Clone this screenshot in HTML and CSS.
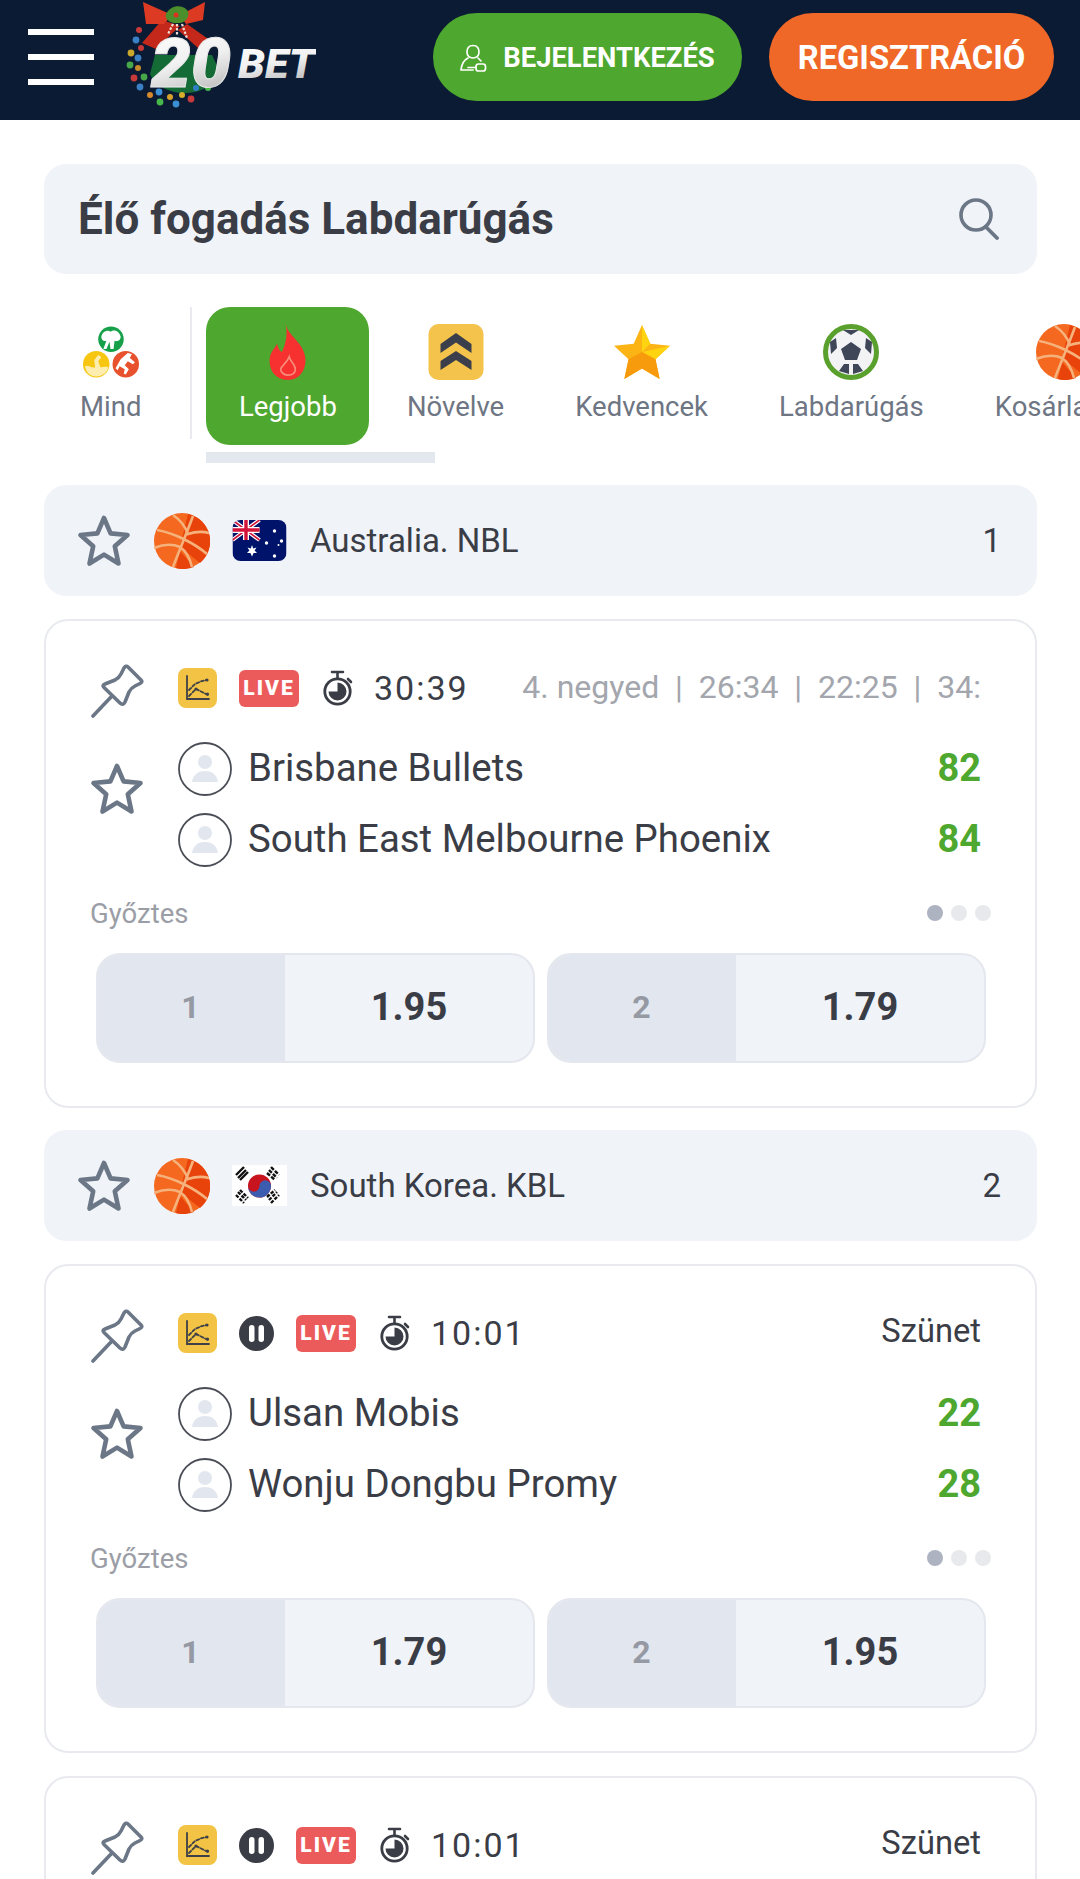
FILE: index.html
```html
<!DOCTYPE html>
<html lang="hu">
<head>
    <meta charset="UTF-8">
    <meta name="viewport" content="width=device-width, initial-scale=1.0">
    <title>Élő fogadás Labdarúgás</title>
    <link rel="stylesheet" href="styles.css">
</head>
<body>
    <!-- ikonok -->
    <svg class="sprite" xmlns="http://www.w3.org/2000/svg">
        <defs>
            <linearGradient id="logoFill" x1="0" y1="0" x2="0.3" y2="1">
                <stop offset="0" stop-color="#ffffff"/>
                <stop offset="0.55" stop-color="#f1f1f1"/>
                <stop offset="1" stop-color="#bdbdbd"/>
            </linearGradient>
            <clipPath id="flagClip"><rect width="54" height="41" rx="8"/></clipPath>
        </defs>
        <symbol id="i-star" viewBox="0 0 54 54">
            <path d="M27 4 L33.6 19.4 L50.5 21 L37.8 32.2 L41.5 49.5 L27 40.6 L12.5 49.5 L16.2 32.2 L3.5 21 L20.4 19.4Z" fill="none" stroke="#6b7686" stroke-width="4.6" stroke-linejoin="round"/>
        </symbol>
        <symbol id="i-ball" viewBox="0 0 56 56">
            <circle cx="28" cy="28" r="28" fill="#f4691f"/>
            <path d="M34 1 A28 28 0 0 1 46 50 L26 34Z" fill="#e8430a"/>
            <path d="M22 55 L26 38 L40 54 A28 28 0 0 1 22 55Z" fill="#e8430a"/>
            <g fill="none" stroke="#f6b27c" stroke-width="2.6">
                <path d="M39 3 C34 17 25 38 19 54"/>
                <path d="M3 17 C20 20 40 30 53 41"/>
                <path d="M0 35 C10 31 19 31 26 34 C32 38 36 46 38 54"/>
                <path d="M19 2 C25 6 31 13 34 21 C40 19 48 18 55 20"/>
            </g>
        </symbol>
        <symbol id="i-aus" viewBox="0 0 54 41">
            <g clip-path="url(#flagClip)">
                <rect width="54" height="41" fill="#00136b"/>
                <path d="M0 0 L27 20 M27 0 L0 20" stroke="#fff" stroke-width="4"/>
                <path d="M0 0 L27 20 M27 0 L0 20" stroke="#d2143a" stroke-width="1.6"/>
                <path d="M13.5 0 V20 M0 10 H27" stroke="#fff" stroke-width="6"/>
                <path d="M13.5 0 V20 M0 10 H27" stroke="#d2143a" stroke-width="3.4"/>
                <g fill="#fff">
                    <path d="M19.500 25 L20.700 28.500 L24 27.500 L22.100 30.500 L24.500 33 L21.100 33.100 L19.500 36.500 L17.900 33.100 L14.500 33 L16.900 30.500 L15 27.500 L18.300 28.500Z"/>
                    <circle cx="42" cy="11" r="1.7"/>
                    <circle cx="34" cy="23" r="1.7"/>
                    <circle cx="49" cy="21" r="1.7"/>
                    <circle cx="42" cy="36" r="1.7"/>
                    <circle cx="46" cy="25" r="1"/>
                </g>
            </g>
        </symbol>
        <symbol id="i-kor" viewBox="0 0 55 41">
            <rect width="55" height="41" fill="#fff"/>
            <circle cx="27.5" cy="21" r="11.5" fill="#c8141e"/>
            <path d="M16 21 A5.75 5.75 0 0 0 27.5 21 A5.75 5.75 0 0 1 39 21 A11.5 11.5 0 0 1 16 21Z" fill="#3c5cb0"/>
            <g stroke="#111" stroke-width="2.4">
                <path d="M4 10 L12 2 M6 13 L14 5 M8 15 L16 7"/>
                <path d="M39 2 L47 10 M37 5 L45 13 M35 8 L43 15" stroke-dasharray="4 1.5"/>
                <path d="M4 30 L12 38 M6 27 L14 35 M8 25 L16 33" stroke-dasharray="3.5 1.5"/>
                <path d="M39 38 L47 30 M37 35 L45 27 M35 32 L43 25" stroke-dasharray="3.5 1.5"/>
            </g>
        </symbol>
        <symbol id="i-pin" viewBox="0 0 54 54">
            <g fill="none" stroke="#6b7686" stroke-width="3.6" stroke-linejoin="round" stroke-linecap="round">
                <path d="M38 3 L51 16 Q53 18 50 19.5 L45 22 Q41 24 39 28 L35 38 Q33 42 30 39 L14.5 24 Q11.5 21 15 20 L25 16 Q29 14 31 10 L34 4 Q36 1 38 3Z"/>
                <path d="M3 52 L21 33"/>
            </g>
        </symbol>
        <symbol id="i-chart" viewBox="0 0 39 40">
            <rect width="39" height="40" rx="8" fill="#f2c344"/>
            <g fill="none" stroke="#3d4048" stroke-width="1.8" stroke-linecap="round">
                <path d="M9 8 V31 H31"/>
                <path d="M11 22 L17 16 L24 13 L29 12" stroke-dasharray="3 2"/>
                <path d="M11 28 L18 21 L24 24 L30 27" stroke-dasharray="3 2"/>
            </g>
            <g fill="#3d4048">
                <circle cx="29" cy="12" r="1.6"/>
                <circle cx="18" cy="21" r="1.6"/>
                <circle cx="29.500" cy="26" r="1.6"/>
            </g>
        </symbol>
        <symbol id="i-watch" viewBox="0 0 30 36">
            <path d="M9 2 H20 M14.500 2 V9 M25 9 L28 12" fill="none" stroke="#3a3d46" stroke-width="2.6" stroke-linecap="round"/>
            <circle cx="14.500" cy="21.500" r="12.700" fill="#fff" stroke="#3a3d46" stroke-width="2.8"/>
            <path d="M14.500 12.500 A9 9 0 1 1 5.500 21.500 H14.500Z" fill="#3a3d46"/>
        </symbol>
        <symbol id="i-avatar" viewBox="0 0 54 54">
            <circle cx="27" cy="27" r="26" fill="#fff" stroke="#4a4d55" stroke-width="1.8"/>
            <circle cx="27" cy="20" r="7" fill="#e2e6ee"/>
            <path d="M14 40 C15 32 21 29 27 29 C33 29 39 32 40 40Z" fill="#e2e6ee"/>
        </symbol>
        <symbol id="i-pause" viewBox="0 0 35 35">
            <circle cx="17.500" cy="17.500" r="17.500" fill="#3a3d46"/>
            <rect x="10" y="9" width="5.500" height="17" rx="2.700" fill="#fff"/>
            <rect x="19.500" y="9" width="5.500" height="17" rx="2.700" fill="#fff"/>
        </symbol>
        <symbol id="i-mind" viewBox="0 0 55 50">
            <circle cx="27.500" cy="12.500" r="12.500" fill="#16a04a"/>
            <path d="M18 10 C19 5 24 3 27 5 C31 2 36 5 37 10 C37 14 33 15 31 14 L30 22 H27 L26 15 L23 22 H20 L23 14 C20 15 18 13 18 10Z" fill="#fff"/>
            <circle cx="13" cy="37" r="13" fill="#f7c610"/>
            <path d="M2 39 C5 37 8 41 12 40 L11 33 L15 28 L18 30 L15 34 L17 40 C20 40 22 39 25 40 C24 45 19 49 13 49 C7 49 3 45 2 39Z" fill="#fdeeb0"/>
            <circle cx="42" cy="37" r="13" fill="#e8512d"/>
            <path d="M44 26 L48 27 L46 31 L51 35 L49 37 L44 34 L41 38 L45 42 L42 47 L40 46 L41 42 L36 39 L34 43 L32 41 L37 32Z" fill="#fff"/>
        </symbol>
        <symbol id="i-flame" viewBox="0 0 32 46">
            <path d="M14 0 C16 9 26 14 29 23 C33 33 28 46 16 46 C5 46 0 37 1 28 C2 22 5 21 7 16 C8 20 9 22 11 23 C14 17 16 8 14 0Z" fill="#f6312f"/>
            <path d="M17 27 C18 31 22 33 22 37 C22 41 19 42 16 42 C13 42 10 40 10 37 C11 34 15 32 17 27Z" fill="none" stroke="#f98a78" stroke-width="1.4"/>
        </symbol>
        <symbol id="i-boost" viewBox="0 0 55 56">
            <rect width="55" height="56" rx="10" fill="#f4c34b"/>
            <path d="M27.500 9 L43 20 V29 L27.500 18.500 L12 29 V20Z" fill="#3a3f4b"/>
            <path d="M27.500 27 L43 37 V46 L27.500 36 L12 46 V37Z" fill="#3a3f4b"/>
        </symbol>
        <symbol id="i-gold" viewBox="0 0 54 52">
            <path d="M27 0 L35 18 L54 20 L40 33 L44 52 L27 42 L10 52 L14 33 L0 20 L19 18Z" fill="#fcb415"/>
            <path d="M27 0 L35 18 L27 26Z M54 20 L40 33 L27 26Z" fill="#fdd40f"/>
            <path d="M44 52 L27 42 L27 26 L40 33Z M10 52 L14 33 L27 26 L27 42Z" fill="#f79a0c"/>
        </symbol>
        <symbol id="i-soccer" viewBox="0 0 56 56">
            <circle cx="28" cy="28" r="25.500" fill="#f3f3f6" stroke="#5aa02c" stroke-width="5"/>
            <path d="M28 18 L38 25 L34 36 H22 L18 25Z" fill="#3e4658"/>
            <path d="M20 6 H36 L28 11Z M7 18 L13 14 L14 24 L8 30Z M49 18 L43 14 L42 24 L48 30Z M16 47 L21 40 H26 L26 50Z M40 47 L35 40 H30 L30 50Z" fill="#3e4658"/>
        </symbol>
        <symbol id="i-search" viewBox="0 0 40 42">
            <circle cx="17" cy="17" r="15" fill="none" stroke="#6b7686" stroke-width="3.6"/>
            <path d="M27 29 L38 40" fill="none" stroke="#6b7686" stroke-width="3.8" stroke-linecap="round"/>
        </symbol>
        <symbol id="i-login" viewBox="0 0 27 28">
            <g fill="none" stroke="#fff" stroke-width="1.7" stroke-linecap="round" stroke-linejoin="round">
                <path d="M13 1.500 C8.500 1.500 7 5 7 8 C7 11 9 14 13 14 C17 14 19 11 19 8 C19 5 17.500 1.500 13 1.500Z"/>
                <path d="M8 14 C4 16 1.500 21 1 26 H13"/>
                <path d="M18 14 C19 15 20 16 21 17"/>
                <rect x="16" y="20" width="9.500" height="7" rx="2.500"/>
                <path d="M16 23.500 H8"/>
            </g>
        </symbol>
    </svg>

    <header class="topbar">
        <button class="menu-btn" aria-label="Menü"><span></span><span></span><span></span></button>
        <svg class="logo" viewBox="0 0 196 120">
            <path d="M35 55 L92 55 L100 72 A36 26 0 0 1 30 74Z" fill="#146b36"/>
            <path d="M42 20 L60 26 L36 49 L22 43Z M67 24 L91 41 L78 48 L58 30Z" fill="#c4281a"/>
            <path d="M23 2 L52 15 L44 24 L26 24Z M85 2 L83 20 L66 24 L60 15Z" fill="#dc3a22"/>
            <path d="M46 14 C50 6 60 4 66 9 C72 14 66 24 58 23 C52 24 44 20 46 14Z" fill="#4b8f2c"/>
            <circle cx="56" cy="15" r="2.500" fill="#d9341f"/>
            <path d="M53 24 L48 34 M62 24 L67 38 M57 24 L57 36" stroke="#f0dcd4" stroke-width="2.200" stroke-dasharray="2.500 1.500"/>
            <g class="lights">
                <circle cx="19" cy="30" r="3" fill="#c83a3a"/>
                <circle cx="16" cy="40" r="3.400" fill="#3b7fc4"/>
                <circle cx="21" cy="48" r="3" fill="#c83a3a"/>
                <circle cx="11" cy="53" r="3.400" fill="#c9a82c"/>
                <circle cx="18" cy="58" r="3.400" fill="#3b7fc4"/>
                <circle cx="10" cy="65" r="3.400" fill="#47a84a"/>
                <circle cx="18" cy="68" r="3" fill="#c98a2c"/>
                <circle cx="14" cy="78" r="3.400" fill="#c83a3a"/>
                <circle cx="24" cy="77" r="3.400" fill="#47a84a"/>
                <circle cx="20" cy="87" r="3.400" fill="#3b7fc4"/>
                <circle cx="30" cy="95" r="3" fill="#d68a2c"/>
                <circle cx="39" cy="92" r="3.400" fill="#3b8fd4"/>
                <circle cx="40" cy="102" r="3.400" fill="#47b84a"/>
                <circle cx="50" cy="97" r="3" fill="#d6a02c"/>
                <circle cx="56" cy="104" r="3.400" fill="#3b8fd4"/>
                <circle cx="62" cy="95" r="3" fill="#d6b02c"/>
                <circle cx="71" cy="99" r="3.400" fill="#c83a3a"/>
                <circle cx="76" cy="88" r="3" fill="#2f7fc4"/>
                <circle cx="88" cy="88" r="3" fill="#47b84a"/>
            </g>
            <text class="logo-num" x="31" y="87" textLength="80" lengthAdjust="spacingAndGlyphs" fill="url(#logoFill)">20</text>
            <text class="logo-bet" x="118" y="78" textLength="77" lengthAdjust="spacingAndGlyphs" fill="url(#logoFill)">BET</text>
        </svg>
        <a class="pill pill-login"><svg class="pill-icon"><use href="#i-login"/></svg>BEJELENTKEZÉS</a>
        <a class="pill pill-register">REGISZTRÁCIÓ</a>
    </header>

    <main class="content">
        <div class="searchbar">
            <h1>Élő fogadás Labdarúgás</h1>
            <svg class="search-icon"><use href="#i-search"/></svg>
        </div>

        <nav class="tabs">
            <a class="tab tab-first"><svg class="tab-icon"><use href="#i-mind"/></svg>Mind</a>
            <span class="tab-sep"></span>
            <a class="tab tab-active"><svg class="tab-icon"><use href="#i-flame"/></svg>Legjobb</a>
            <a class="tab"><svg class="tab-icon"><use href="#i-boost"/></svg>Növelve</a>
            <a class="tab"><svg class="tab-icon"><use href="#i-gold"/></svg>Kedvencek</a>
            <a class="tab"><svg class="tab-icon"><use href="#i-soccer"/></svg>Labdarúgás</a>
            <a class="tab"><svg class="tab-icon"><use href="#i-ball"/></svg>Kosárlabda</a>
        </nav>
        <div class="tabs-scroll"></div>

        <section class="league">
            <svg class="league-star"><use href="#i-star"/></svg>
            <svg class="league-ball"><use href="#i-ball"/></svg>
            <svg class="league-flag"><use href="#i-aus"/></svg>
            <span class="league-name">Australia. NBL</span>
            <span class="league-count">1</span>
        </section>

        <article class="card">
            <div class="match-head">
                <svg class="pin"><use href="#i-pin"/></svg>
                <svg class="chart"><use href="#i-chart"/></svg>
                <span class="live">LIVE</span>
                <svg class="watch"><use href="#i-watch"/></svg>
                <span class="clock">30:39</span>
                <span class="period period-scores">4. negyed &nbsp;|&nbsp; 26:34 &nbsp;|&nbsp; 22:25 &nbsp;|&nbsp; 34:</span>
            </div>
            <div class="match-body">
                <svg class="fav"><use href="#i-star"/></svg>
                <div class="teams">
                    <div class="team">
                        <svg class="avatar"><use href="#i-avatar"/></svg>
                        <span class="team-name">Brisbane Bullets</span>
                        <b class="score">82</b>
                    </div>
                    <div class="team">
                        <svg class="avatar"><use href="#i-avatar"/></svg>
                        <span class="team-name">South East Melbourne Phoenix</span>
                        <b class="score">84</b>
                    </div>
                </div>
            </div>
            <div class="market">
                <span class="market-name">Győztes</span>
                <span class="dots"><i class="dot dot-on"></i><i class="dot"></i><i class="dot"></i></span>
            </div>
            <div class="odds">
                <div class="odd"><span class="odd-label">1</span><span class="odd-value">1.95</span></div>
                <div class="odd"><span class="odd-label">2</span><span class="odd-value">1.79</span></div>
            </div>
        </article>

        <section class="league">
            <svg class="league-star"><use href="#i-star"/></svg>
            <svg class="league-ball"><use href="#i-ball"/></svg>
            <svg class="league-flag"><use href="#i-kor"/></svg>
            <span class="league-name">South Korea. KBL</span>
            <span class="league-count">2</span>
        </section>

        <article class="card">
            <div class="match-head">
                <svg class="pin"><use href="#i-pin"/></svg>
                <svg class="chart"><use href="#i-chart"/></svg>
                <svg class="pause"><use href="#i-pause"/></svg>
                <span class="live">LIVE</span>
                <svg class="watch"><use href="#i-watch"/></svg>
                <span class="clock">10:01</span>
                <span class="period">Szünet</span>
            </div>
            <div class="match-body">
                <svg class="fav"><use href="#i-star"/></svg>
                <div class="teams">
                    <div class="team">
                        <svg class="avatar"><use href="#i-avatar"/></svg>
                        <span class="team-name">Ulsan Mobis</span>
                        <b class="score">22</b>
                    </div>
                    <div class="team">
                        <svg class="avatar"><use href="#i-avatar"/></svg>
                        <span class="team-name">Wonju Dongbu Promy</span>
                        <b class="score">28</b>
                    </div>
                </div>
            </div>
            <div class="market">
                <span class="market-name">Győztes</span>
                <span class="dots"><i class="dot dot-on"></i><i class="dot"></i><i class="dot"></i></span>
            </div>
            <div class="odds">
                <div class="odd"><span class="odd-label">1</span><span class="odd-value">1.79</span></div>
                <div class="odd"><span class="odd-label">2</span><span class="odd-value">1.95</span></div>
            </div>
        </article>

        <article class="card">
            <div class="match-head">
                <svg class="pin"><use href="#i-pin"/></svg>
                <svg class="chart"><use href="#i-chart"/></svg>
                <svg class="pause"><use href="#i-pause"/></svg>
                <span class="live">LIVE</span>
                <svg class="watch"><use href="#i-watch"/></svg>
                <span class="clock">10:01</span>
                <span class="period">Szünet</span>
            </div>
        </article>
    </main>
</body>
</html>
```

FILE: styles.css
```css
html, body {
    margin: 0;
    height: 1879px;
    overflow: hidden;
    background: #fff;
}
body {
    font-family: Roboto, "Liberation Sans", sans-serif;
    color: #3a3d46;
}
.sprite {
    display: block;
    width: 0;
    height: 0;
    overflow: hidden;
}

/* header */
.topbar {
    display: flex;
    align-items: center;
    height: 120px;
    padding: 0 26px 7px 28px;
    background: #0b1b33;
    box-sizing: border-box;
}
.menu-btn {
    display: flex;
    flex-direction: column;
    gap: 19px;
    width: 66px;
    padding: 0;
    border: none;
    background: none;
}
.menu-btn span {
    display: block;
    height: 6px;
    background: #fff;
}
.logo {
    align-self: flex-start;
    width: 196px;
    height: 120px;
    margin-left: 26px;
}
.logo-num {
    font-size: 68px;
    font-weight: 900;
    font-style: italic;
    stroke: #e8e8e8;
    stroke-width: 1px;
}
.logo-bet {
    font-size: 41px;
    font-weight: 900;
    font-style: italic;
}
.pill {
    display: flex;
    align-items: center;
    justify-content: center;
    box-sizing: border-box;
    height: 88px;
    padding-top: 2px;
    border-radius: 44px;
    color: #fff;
    font-weight: 700;
}
.pill-login {
    width: 309px;
    margin-left: auto;
    gap: 16px;
    background: #4ea72e;
    font-size: 27.4px;
}
.pill-icon {
    width: 27px;
    height: 28px;
}
.pill-register {
    width: 285px;
    margin-left: 27px;
    background: #f06827;
    font-size: 32.7px;
}

/* content */
.content {
    padding: 44px 43px 0 44px;
}
.searchbar {
    display: flex;
    align-items: center;
    justify-content: space-between;
    height: 110px;
    padding: 0 38px 0 34px;
    border-radius: 22px;
    background: #f0f3f8;
}
.searchbar h1 {
    margin: 0;
    font-size: 44px;
    font-weight: 700;
    color: #3a3d46;
}
.search-icon {
    width: 40px;
    height: 42px;
}

/* tabs */
.tabs {
    display: flex;
    height: 138px;
    margin: 33px -43px 0 0;
    overflow: hidden;
}
.tab {
    display: flex;
    flex: none;
    flex-direction: column;
    align-items: center;
    box-sizing: border-box;
    height: 138px;
    padding: 17px 35.5px 0;
    font-size: 27.5px;
    line-height: 40px;
    color: #6e7583;
}
.tab-icon {
    flex: none;
    width: 56px;
    height: 56px;
    margin-bottom: 7px;
}
.tab-sep {
    flex: none;
    width: 2px;
    height: 132px;
    margin: 0 14px;
    background: #e8eaef;
}
.tab-first {
    padding: 17px 35px 0 36px;
}
.tab-active {
    width: 163px;
    margin-right: 2px;
    padding: 17px 0 0;
    border-radius: 24px;
    background: #4ea72e;
    color: #fff;
}
.tabs-scroll {
    width: 229px;
    height: 11px;
    margin: 7px 0 0 162px;
    background: #e3e7ee;
}

/* league */
.league {
    display: flex;
    align-items: center;
    height: 111px;
    margin-top: 22px;
    padding: 0 36px 0 33px;
    border-radius: 22px;
    background: #f0f3f8;
}
.league-star {
    width: 54px;
    height: 54px;
}
.league-ball {
    width: 56px;
    height: 56px;
    margin-left: 23px;
}
.league-flag {
    width: 55px;
    height: 41px;
    margin-left: 22px;
}
.league-name {
    margin-left: 23px;
    font-size: 33px;
}
.league-count {
    margin-left: auto;
    font-size: 33px;
}

/* match card */
.card {
    margin-top: 23px;
    padding: 39px 44px 43px;
    border: 2px solid #e8eaef;
    border-radius: 24px;
}
.match-head {
    display: flex;
    align-items: center;
    height: 56px;
    padding-right: 10px;
}
.pin {
    flex: none;
    width: 54px;
    height: 54px;
    margin: 6px 34px 0 0;
}
.chart {
    flex: none;
    width: 39px;
    height: 40px;
}
.pause {
    flex: none;
    width: 35px;
    height: 35px;
    margin-left: 22px;
}
.live {
    flex: none;
    width: 60px;
    height: 37px;
    margin-left: 22px;
    border-radius: 6px;
    background: #ec5b5b;
    color: #fff;
    font-size: 21px;
    font-weight: 900;
    letter-spacing: 2px;
    line-height: 37px;
    text-align: center;
}
.watch {
    flex: none;
    width: 30px;
    height: 36px;
    margin-left: 24px;
}
.clock {
    flex: none;
    margin-left: 21px;
    font-size: 34px;
    letter-spacing: 2px;
}
.period {
    flex: 1;
    padding-bottom: 5px;
    font-size: 32.7px;
    text-align: right;
    white-space: nowrap;
    overflow: hidden;
}
.period-scores {
    padding-bottom: 3px;
    color: #a3a6ad;
    font-size: 32px;
}
.match-body {
    display: flex;
    margin-top: 17px;
    padding-right: 10px;
}
.fav {
    flex: none;
    width: 54px;
    height: 54px;
    margin: 29px 34px 0 0;
}
.teams {
    flex: 1;
}
.team {
    display: flex;
    align-items: center;
    height: 71px;
}
.avatar {
    flex: none;
    width: 54px;
    height: 54px;
}
.team-name {
    margin-left: 16px;
    padding-bottom: 2px;
    font-size: 38.4px;
}
.score {
    margin-left: auto;
    padding-bottom: 2px;
    color: #4ea72e;
    font-size: 38px;
    font-weight: 700;
}
.market {
    display: flex;
    align-items: center;
    justify-content: space-between;
    height: 40px;
    margin-top: 18px;
}
.market-name {
    font-size: 27.5px;
    color: #9b9ea6;
}
.dots {
    display: flex;
    gap: 8px;
}
.dot {
    width: 16px;
    height: 16px;
    border-radius: 50%;
    background: #e8e9ec;
}
.dot-on {
    background: #aeb3c2;
}
.odds {
    display: flex;
    gap: 12px;
    margin: 20px 5px 0 6px;
}
.odd {
    display: flex;
    flex: 1;
    height: 110px;
    box-sizing: border-box;
    border: 2px solid #e4e7ee;
    border-radius: 24px;
    background: #f0f3f8;
    overflow: hidden;
}
.odd-label {
    flex: none;
    box-sizing: border-box;
    width: 187px;
    padding-right: 2px;
    background: #e2e6ee;
    color: #9599a3;
    font-size: 32px;
    font-weight: 700;
    line-height: 104px;
    text-align: center;
}
.odd-value {
    flex: 1;
    color: #3a3d46;
    font-size: 38px;
    font-weight: 700;
    line-height: 104px;
    text-align: center;
}
```
